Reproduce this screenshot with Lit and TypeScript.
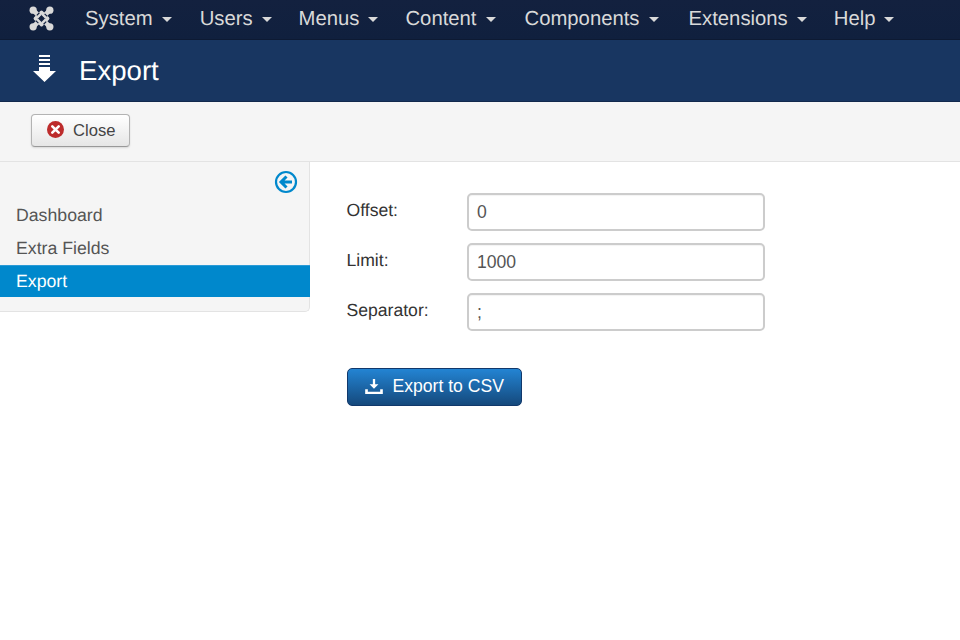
import { LitElement, html, css } from "lit";
import { customElement } from "lit/decorators.js";

const MENU = [
  ["System", 28], ["Users", 27], ["Menus", 27], ["Content", 29], ["Components", 30], ["Extensions", 27], ["Help", 0],
] as const;

@customElement("app-root")
export class AppRoot extends LitElement {
  static styles = css`
    :host { display: block; width: 960px; height: 640px; overflow: hidden; background: #fff; font-family: "Liberation Sans", Arial, sans-serif; color: #333; font-size: 20.3px; text-rendering: geometricPrecision; }
    * { box-sizing: border-box; }
    .nav { height: 40px; background: linear-gradient(#13213f, #10203e); border-bottom: 1px solid #0d1a33; display: flex; align-items: center; padding-left: 29px; color: #d9d9d9; }
    .logo { width: 25px; height: 25px; margin-right: 31px; margin-top: -3px; display: block; }
    .menu { display: flex; margin: -1px 0 0; padding: 0; list-style: none; }
    .menu li { display: flex; align-items: center; gap: 9px; line-height: 24px; }
    .caret { width: 0; height: 0; border-left: 5.500px solid transparent; border-right: 5.500px solid transparent; border-top: 5.500px solid #d9d9d9; margin-top: 1px; }
    .head { height: 62px; background: #183661; border-bottom: 1px solid #12294d; display: flex; align-items: center; padding-left: 32px; color: #fff; }
    .head svg { width: 26px; height: 30px; display: block; margin-top: -3px; }
    .head h1 { margin: 1px 0 0 21px; font-size: 27.6px; font-weight: 400; line-height: 34px; }
    .bar { height: 60px; background: #f5f5f5; border-bottom: 1px solid #e3e3e3; display: flex; align-items: flex-start; padding: 12px 0 0 31px; }
    .close { height: 33px; width: 99px; display: flex; align-items: center; gap: 9px; padding: 0 0 0 16px; background: linear-gradient(#fff, #e6e6e6); border: 1px solid #b3b3b3; border-bottom-color: #999; border-radius: 4px; box-shadow: 0 1px 2px rgba(0,0,0,.12); font: inherit; font-size: 16.6px; color: #444; }
    .close svg { width: 17px; height: 17px; display: block; margin-top: -3px; margin-left: -1px; }
    .body { display: flex; align-items: flex-start; }
    .side { width: 310px; height: 150px; background: #f5f5f5; border-right: 1px solid #e3e3e3; border-bottom: 1px solid #e3e3e3; border-bottom-right-radius: 5px; padding-top: 8px; }
    .toggle { display: flex; justify-content: flex-end; padding-right: 12px; height: 24px; }
    .toggle svg { width: 24px; height: 24px; display: block; margin-right: -1px; }
    .links { margin: 5px 0 0; padding: 0; list-style: none; font-size: 17.7px; color: #555; }
    .links li { height: 33px; line-height: 32px; padding-left: 16px; }
    .links li.on { background: #0088cc; color: #fff; border-top: 1px solid #2a9ad6; margin-right: -1px; line-height: 31px; height: 32px; }
    .main { padding: 31px 0 0 36.500px; font-size: 17.6px; }
    .row { display: flex; height: 38px; margin-bottom: 12px; }
    .row label { width: 120.500px; line-height: 34px; color: #333; }
    .row input { width: 298px; height: 38px; padding: 0 8px; border: 2px solid #ccc; border-radius: 5px; background: #fff; font: inherit; color: #555; outline: none; box-shadow: inset 0 1px 1px rgba(0,0,0,.05); }
    .go { margin-top: 37px; width: 175.500px; height: 38px; display: flex; align-items: center; gap: 10px; padding: 0 0 2px 17px; background: linear-gradient(#2384d3, #15497c); border: 1px solid #11386b; border-radius: 5px; color: #fff; font: inherit; }
    .go svg { width: 18px; height: 15px; display: block; }
  `;

  render() {
    return html`
      <nav class="nav">
        <svg class="logo" viewBox="0 0 24 24" fill="none" aria-label="Joomla">
          <g stroke="#d9d9d9" stroke-linecap="round">
            <path d="M4.500 4.500 L 19.500 19.500 M 19.500 4.500 L 4.500 19.500" stroke-width="4.400" />
            <path d="M6 12 L 12 6 L 18 12 L 12 18 Z" stroke-width="3.200" stroke-linejoin="round" />
          </g>
          <g fill="#d9d9d9">
            <circle cx="4" cy="4" r="3.500" /><circle cx="20" cy="4" r="3.500" />
            <circle cx="4" cy="20" r="3.500" /><circle cx="20" cy="20" r="3.500" />
          </g>
          <g stroke="#13213f" stroke-width="1.100">
            <path d="M12 9.500 L 14.500 12 L 12 14.500 L 9.500 12 Z" fill="#13213f" />
            <path d="M7.500 9 L 10 6.500 M 14 17.500 L 16.500 15 M 9 16.500 L 6.500 14 M 17.500 10 L 15 7.500" />
          </g>
        </svg>
        <ul class="menu">
          ${MENU.map(([m, g]) => html`<li style="margin-right:${g}px">${m}<span class="caret"></span></li>`)}
        </ul>
      </nav>
      <header class="head">
        <svg viewBox="0 0 26 30" fill="#fff" aria-hidden="true">
          <path d="M7 1h11v2H7zM7 5h11v2H7zM7 9h11v2H7zM7 13h11v4h6L12.500 28 1 17h6z" />
        </svg>
        <h1>Export</h1>
      </header>
      <div class="bar">
        <button class="close">
          <svg viewBox="0 0 17 17" aria-hidden="true">
            <circle cx="8.500" cy="8.500" r="8.500" fill="#bd2c2c" />
            <path d="M5.300 5.300l6.400 6.400M11.700 5.300l-6.400 6.400" stroke="#fff" stroke-width="2.600" stroke-linecap="round" />
          </svg>
          Close
        </button>
      </div>
      <div class="body">
        <aside class="side">
          <div class="toggle">
            <svg viewBox="0 0 24 24" fill="none" stroke="#0088cc" aria-hidden="true">
              <circle cx="12" cy="12" r="10" stroke-width="2.200" />
              <path d="M12.500 6.500 L7 12 L12.500 17.500 M7.500 12 H18" stroke-width="3" />
            </svg>
          </div>
          <ul class="links">
            <li>Dashboard</li>
            <li>Extra Fields</li>
            <li class="on">Export</li>
          </ul>
        </aside>
        <main class="main">
          <div class="row"><label>Offset:</label><input value="0" /></div>
          <div class="row"><label>Limit:</label><input value="1000" /></div>
          <div class="row"><label>Separator:</label><input value=";" /></div>
          <button class="go">
            <svg viewBox="0 0 20 17" fill="#fff" aria-hidden="true">
              <path d="M8.700 0h2.600v6h3.700L10 11 5 6h3.700z" />
              <path d="M0 11.500h3v3h14v-3h3V17H0z" />
            </svg>
            Export to CSV
          </button>
        </main>
      </div>
    `;
  }
}
